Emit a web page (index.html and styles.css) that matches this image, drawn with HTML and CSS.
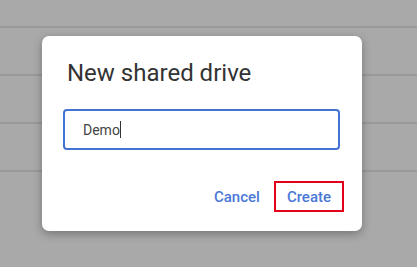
FILE: index.html
```html
<!DOCTYPE html>
<html lang="en">
<head>
  <meta charset="UTF-8" />
  <meta name="viewport" content="width=device-width, initial-scale=1.0"/>
  <title>New shared drive</title>
  <link rel="stylesheet" href="styles.css">
</head>
<body>
  <div class="backdrop">
    <div class="row first"></div>
    <div class="row"></div>
    <div class="row"></div>
    <div class="row"></div>
  </div>

  <div class="dialog">
    <h1 class="title">New shared drive</h1>

    <div class="field">
      <span class="value">Demo</span><span class="caret"></span>
    </div>

    <div class="actions">
      <button class="btn">Cancel</button>
      <button class="btn btn-marked">Create</button>
    </div>
  </div>
</body>
</html>
```

FILE: styles.css
```css
* {
  box-sizing: border-box;
  margin: 0;
  padding: 0;
}

body {
  background-color: #a9a9a9;
  font-family: Roboto, 'Liberation Sans', sans-serif;
  height: 267px;
  overflow: hidden;
}

.row {
  height: 48px;
  border-bottom: 2px solid #9a9a9a;
}

.row.first {
  height: 28px;
}

.dialog {
  position: absolute;
  left: 42px;
  top: 36px;
  width: 320px;
  height: 195px;
  background-color: #fff;
  border-radius: 7px;
  box-shadow: 0 3px 10px rgba(0, 0, 0, 0.3);
  padding: 23px 18px 0 21px;
}

.title {
  font-size: 24px;
  font-weight: 400;
  line-height: 29px;
  color: #333;
  padding-left: 4px;
}

.field {
  margin-top: 21px;
  height: 41px;
  width: 277px;
  border: 2px solid #4373d2;
  border-radius: 4px;
  padding-left: 18px;
  display: flex;
  align-items: center;
  font-size: 14px;
  color: #444;
}

.caret {
  display: inline-block;
  width: 1px;
  height: 17px;
  background-color: #333;
}

.actions {
  display: flex;
  justify-content: flex-end;
  gap: 1px;
  margin-top: 31px;
}

.btn {
  background: none;
  border: 2px solid transparent;
  font-family: inherit;
  font-size: 15px;
  font-weight: 500;
  color: #4a78d6;
  height: 31px;
  padding: 0 11px;
  cursor: pointer;
}

.btn-marked {
  border-color: #e2001a;
}
```
